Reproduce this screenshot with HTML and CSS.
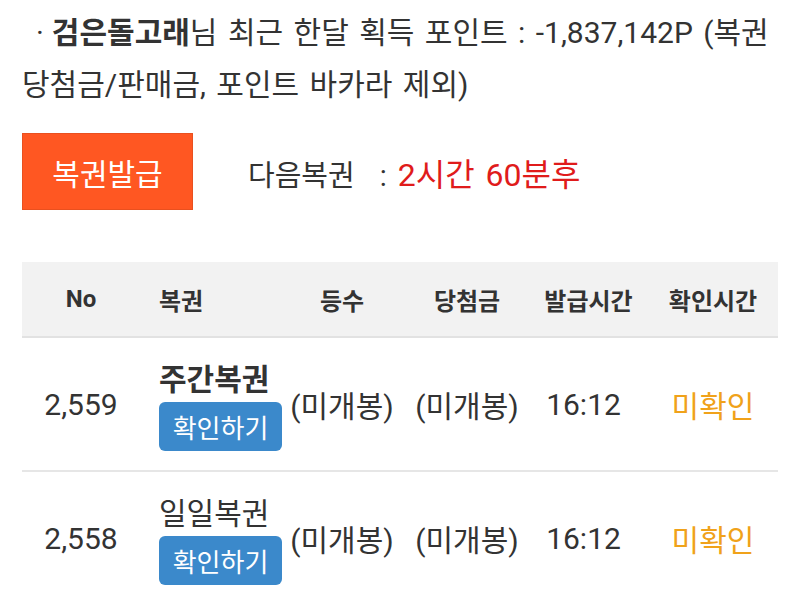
FILE: index.html
```html
<!DOCTYPE html>
<html lang="ko">
<head>
<meta charset="utf-8">
<title>복권</title>
<link rel="stylesheet" href="styles.css">
</head>
<body>
<div class="page">
  <p class="summary"><span class="line first"><span class="dot">·</span><b>검은돌고래</b><span>님 최근 한달 획득 포인트 : -1,837,142P (복권</span></span><span class="line">당첨금/판매금, 포인트 바카라 제외)</span></p>
  <div class="issue">
    <button class="issue-btn">복권발급</button>
    <div class="next">다음복권<span class="sep">:</span><span class="remain">2시간 60분후</span></div>
  </div>
  <div class="table">
    <div class="row head">
      <div class="c no">No</div>
      <div class="c name">복권</div>
      <div class="c rank">등수</div>
      <div class="c prize">당첨금</div>
      <div class="c issued">발급시간</div>
      <div class="c checked">확인시간</div>
    </div>
    <div class="row">
      <div class="c no">2,559</div>
      <div class="c name">
        <div class="title bold">주간복권</div>
        <button class="check-btn">확인하기</button>
      </div>
      <div class="c rank">(미개봉)</div>
      <div class="c prize">(미개봉)</div>
      <div class="c issued">16:12</div>
      <div class="c checked status">미확인</div>
    </div>
    <div class="row">
      <div class="c no">2,558</div>
      <div class="c name">
        <div class="title">일일복권</div>
        <button class="check-btn">확인하기</button>
      </div>
      <div class="c rank">(미개봉)</div>
      <div class="c prize">(미개봉)</div>
      <div class="c issued">16:12</div>
      <div class="c checked status">미확인</div>
    </div>
  </div>
</div>
</body>
</html>
```
FILE: styles.css
```css
html, body {
  margin: 0;
  padding: 0;
  background: #ffffff;
}
body {
  font-family: Roboto, "Noto Sans CJK KR", sans-serif;
  color: #333333;
  font-size: 30px;
}
.page {
  padding: 7px 22px 0 22px;
}
.summary {
  margin: 0;
  line-height: 52px;
  word-spacing: 3px;
}
.summary .line {
  display: block;
  white-space: nowrap;
}
.summary b {
  font-weight: 700;
}
.dot {
  margin: 0 8px 0 14px;
}
.issue {
  display: flex;
  align-items: center;
  margin-top: 22px;
}
.issue-btn {
  width: 171px;
  height: 77px;
  background: #ff5722;
  border: 1px solid #e9501f;
  color: #ffffff;
  font-family: inherit;
  font-size: 30px;
  padding: 0;
}
.next {
  margin-left: 55px;
  font-size: 29px;
}
.sep {
  margin: 0 11px 0 25px;
}
.remain {
  color: #e01b1b;
  font-size: 32px;
  word-spacing: 3px;
}
.table {
  margin-top: 52px;
}
.row {
  display: grid;
  grid-template-columns: 118px 147px 110px 140px 103px 138px;
  height: 132px;
  border-bottom: 2px solid #e6e6e6;
  align-items: center;
}
.row.head {
  height: 74px;
  background: #f2f2f2;
  font-size: 24px;
  font-weight: 700;
  border-bottom: 2px solid #e2e2e2;
}
.c {
  text-align: center;
  white-space: nowrap;
}
.c.name {
  text-align: left;
  padding-left: 19px;
}
.c.checked {
  padding-left: 8px;
}
.row:not(.head) .c.issued {
  padding-right: 10px;
}
.row .name .title {
  line-height: 34px;
  margin-top: 6px;
}
.title.bold {
  font-weight: 700;
}
.check-btn {
  display: block;
  margin-top: 5px;
  width: 123px;
  height: 49px;
  background: #3b89cb;
  border: none;
  border-radius: 6px;
  color: #ffffff;
  font-family: inherit;
  font-size: 26px;
  padding: 0;
}
.status {
  color: #f0a21a;
}
```
